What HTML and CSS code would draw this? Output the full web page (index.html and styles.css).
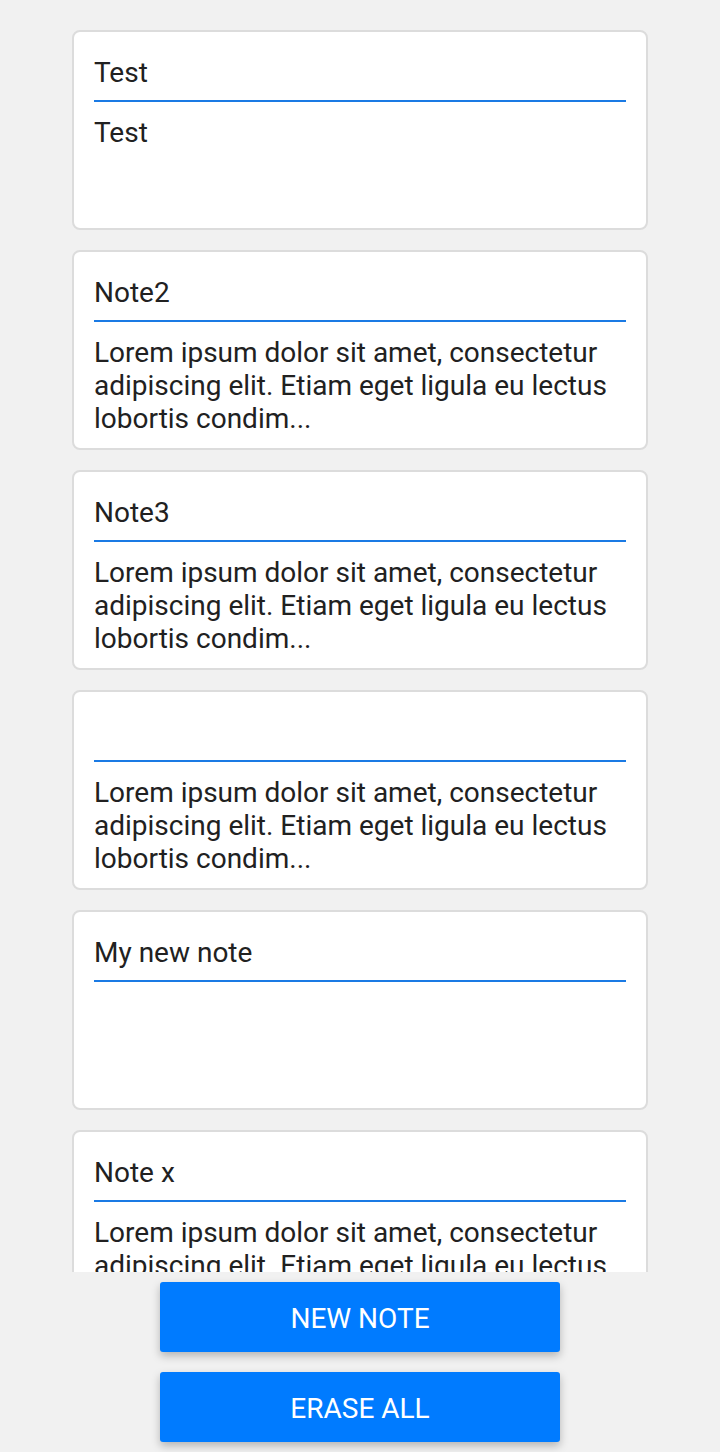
FILE: index.html
```html
<!DOCTYPE html>
<html>
<head>
<meta charset="utf-8">
<link rel="stylesheet" href="styles.css">
</head>
<body>
<div class="app">
  <div class="list">
    <div class="card">
      <div class="title">Test</div>
      <div class="body">Test</div>
    </div>
    <div class="card">
      <div class="title">Note2</div>
      <div class="body">Lorem ipsum dolor sit amet, consectetur adipiscing elit. Etiam eget ligula eu lectus lobortis condim...</div>
    </div>
    <div class="card">
      <div class="title">Note3</div>
      <div class="body">Lorem ipsum dolor sit amet, consectetur adipiscing elit. Etiam eget ligula eu lectus lobortis condim...</div>
    </div>
    <div class="card">
      <div class="title"></div>
      <div class="body">Lorem ipsum dolor sit amet, consectetur adipiscing elit. Etiam eget ligula eu lectus lobortis condim...</div>
    </div>
    <div class="card">
      <div class="title">My new note</div>
      <div class="body"></div>
    </div>
    <div class="card">
      <div class="title">Note x</div>
      <div class="body">Lorem ipsum dolor sit amet, consectetur adipiscing elit. Etiam eget ligula eu lectus lobortis condim...</div>
    </div>
  </div>
  <div class="actions">
    <button class="btn">NEW NOTE</button>
    <button class="btn">ERASE ALL</button>
  </div>
</div>
</body>
</html>
```
FILE: styles.css
```css
html, body {
  margin: 0;
  padding: 0;
  background: #f1f1f1;
  font-family: Roboto, "Liberation Sans", sans-serif;
  color: #212121;
}
.app {
  height: 1452px;
  display: flex;
  flex-direction: column;
}
.list {
  height: 1272px;
  overflow: hidden;
  padding-top: 30px;
  box-sizing: border-box;
  display: flex;
  flex-direction: column;
  align-items: center;
  gap: 20px;
  flex-shrink: 0;
}
.card {
  width: 576px;
  height: 200px;
  flex-shrink: 0;
  box-sizing: border-box;
  background: #fff;
  border: 2px solid #dcdcdc;
  border-radius: 8px;
  padding: 20px 20px 0;
  overflow: hidden;
}
.title {
  font-size: 28px;
  line-height: 42px;
  height: 42px;
  padding-bottom: 6px;
  border-bottom: 2px solid #1a7ae4;
}
.body {
  font-size: 28px;
  line-height: 33px;
  margin-top: 14px;
  max-height: 99px;
  overflow: hidden;
}
.actions {
  display: flex;
  flex-direction: column;
  align-items: center;
  gap: 20px;
  padding-top: 10px;
}
.btn {
  width: 400px;
  height: 70px;
  border: none;
  border-radius: 3px;
  background: #007bff;
  color: #fff;
  font-family: Roboto, "Liberation Sans", sans-serif;
  font-size: 28px;
  box-shadow: 0 4px 8px rgba(0, 0, 0, 0.25);
  padding: 2px 0 0;
}
```
